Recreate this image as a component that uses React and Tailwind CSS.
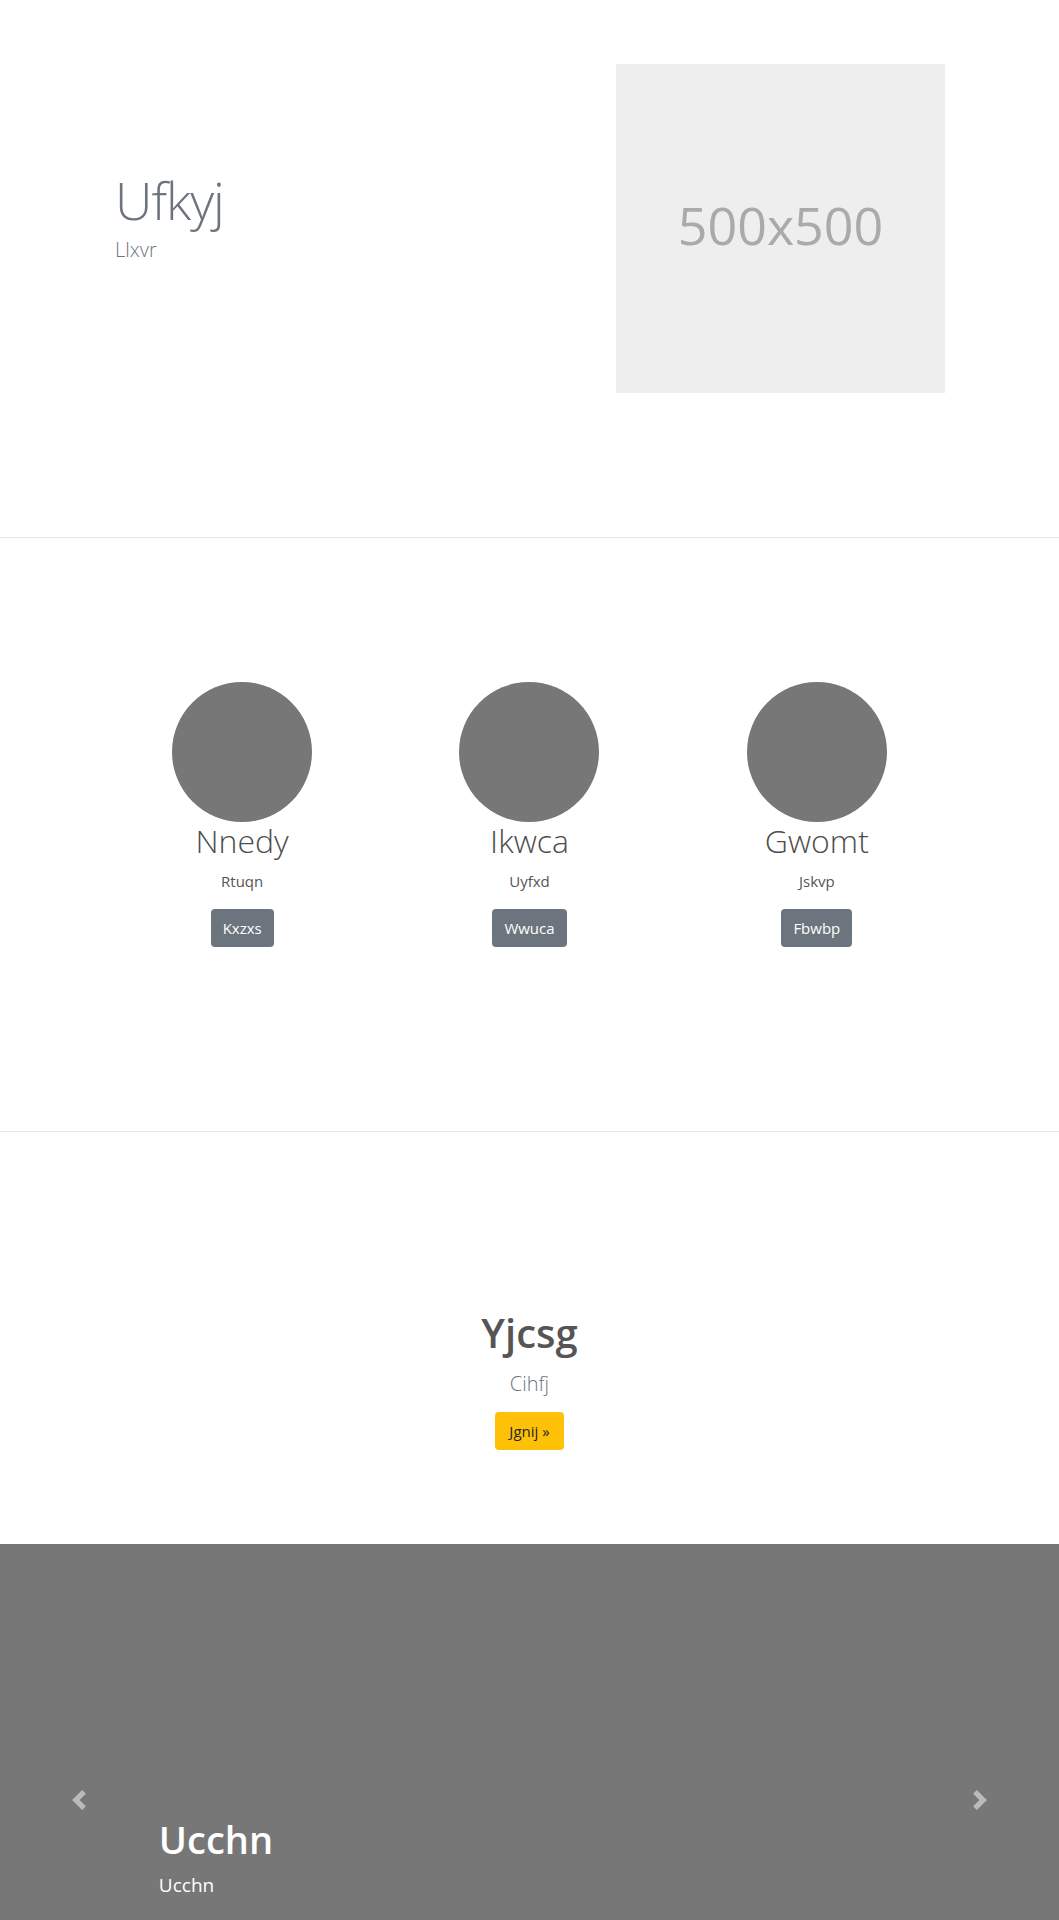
import { useState } from "react";

const TEAM = [
  { name: "Nnedy", role: "Rtuqn", cta: "Kxzxs" },
  { name: "Ikwca", role: "Uyfxd", cta: "Wwuca" },
  { name: "Gwomt", role: "Jskvp", cta: "Fbwbp" },
];

function Chevron({ dir }) {
  // bootstrap-style carousel chevrons
  const d =
    dir === "prev"
      ? "M5.25 0l-4 4 4 4 1.5-1.5L4.25 4l2.5-2.5L5.25 0z"
      : "M2.75 0l-1.5 1.5L3.75 4l-2.5 2.5L2.75 8l4-4-4-4z";
  return (
    <svg width="20" height="20" viewBox="0 0 8 8" fill="#fff">
      <path d={d} />
    </svg>
  );
}

export default function App() {
  const [slide, setSlide] = useState(0);

  return (
    <div className="w-[1059px] bg-white font-['Open_Sans',sans-serif]">
      {/* Hero */}
      <section className="flex items-start justify-between pl-[115px] pr-[114px] pt-[64px] pb-[144px] border-b border-[#e5e5e5]">
        <div className="mt-[105px]">
          <h1 className="text-[52px] leading-[1.2] font-light tracking-[-1px] text-[#6c757d]">Ufkyj</h1>
          <p className="mt-[4px] text-[20px] leading-[1.5] font-light text-[#6c757d]">Llxvr</p>
        </div>
        <div className="w-[329px] h-[329px] bg-[#eeeeee] flex items-center justify-center">
          <span className="mb-[7px] text-[52px] text-[#aaaaaa]">500x500</span>
        </div>
      </section>

      {/* Team */}
      <section className="pt-[144px] pb-[184px] border-b border-[#e5e5e5]">
        <div className="w-[862px] mx-auto grid grid-cols-3">
          {TEAM.map((m) => (
            <div key={m.name} className="flex flex-col items-center">
              <div className="w-[140px] h-[140px] rounded-full bg-[#777777]" />
              <h2 className="text-[32px] leading-[1.2] font-light text-[#4d4d4d]">{m.name}</h2>
              <p className="mt-[10px] text-[15px] leading-[1.5] text-[#555555]">{m.role}</p>
              <button className="mt-[16px] h-[38px] px-3 rounded-[4px] bg-[#6c757d] text-white text-[15px]">
                {m.cta}
              </button>
            </div>
          ))}
        </div>
      </section>

      {/* Call to action */}
      <section className="pt-[177px] pb-[94px] flex flex-col items-center">
        <h1 className="text-[40px] leading-[1.2] font-semibold text-[#555555]">Yjcsg</h1>
        <p className="mt-[12px] text-[20px] leading-[1.5] font-light text-[#6c757d]">Cihfj</p>
        <button className="mt-[13px] h-[38px] px-[14px] rounded-[4px] bg-[#ffc107] text-[#212529] text-[15px]">
          Jgnij »
        </button>
      </section>

      {/* Carousel */}
      <section className="h-[376px] overflow-hidden">
        <div className="relative h-[512px] bg-[#777777]">
          <button
            onClick={() => setSlide(slide - 1)}
            className="absolute left-0 top-0 bottom-0 w-[15%] flex items-center justify-center opacity-50"
          >
            <Chevron dir="prev" />
          </button>
          <button
            onClick={() => setSlide(slide + 1)}
            className="absolute right-0 top-0 bottom-0 w-[15%] flex items-center justify-center opacity-50"
          >
            <Chevron dir="next" />
          </button>
          <div className="absolute left-[15%] right-[15%] top-[273px] text-white">
            <h1 className="text-[38px] leading-[1.2] font-semibold">Ucchn</h1>
            <p className="mt-[9px] text-[19px] leading-[1.5]">Ucchn</p>
          </div>
        </div>
      </section>
    </div>
  );
}
